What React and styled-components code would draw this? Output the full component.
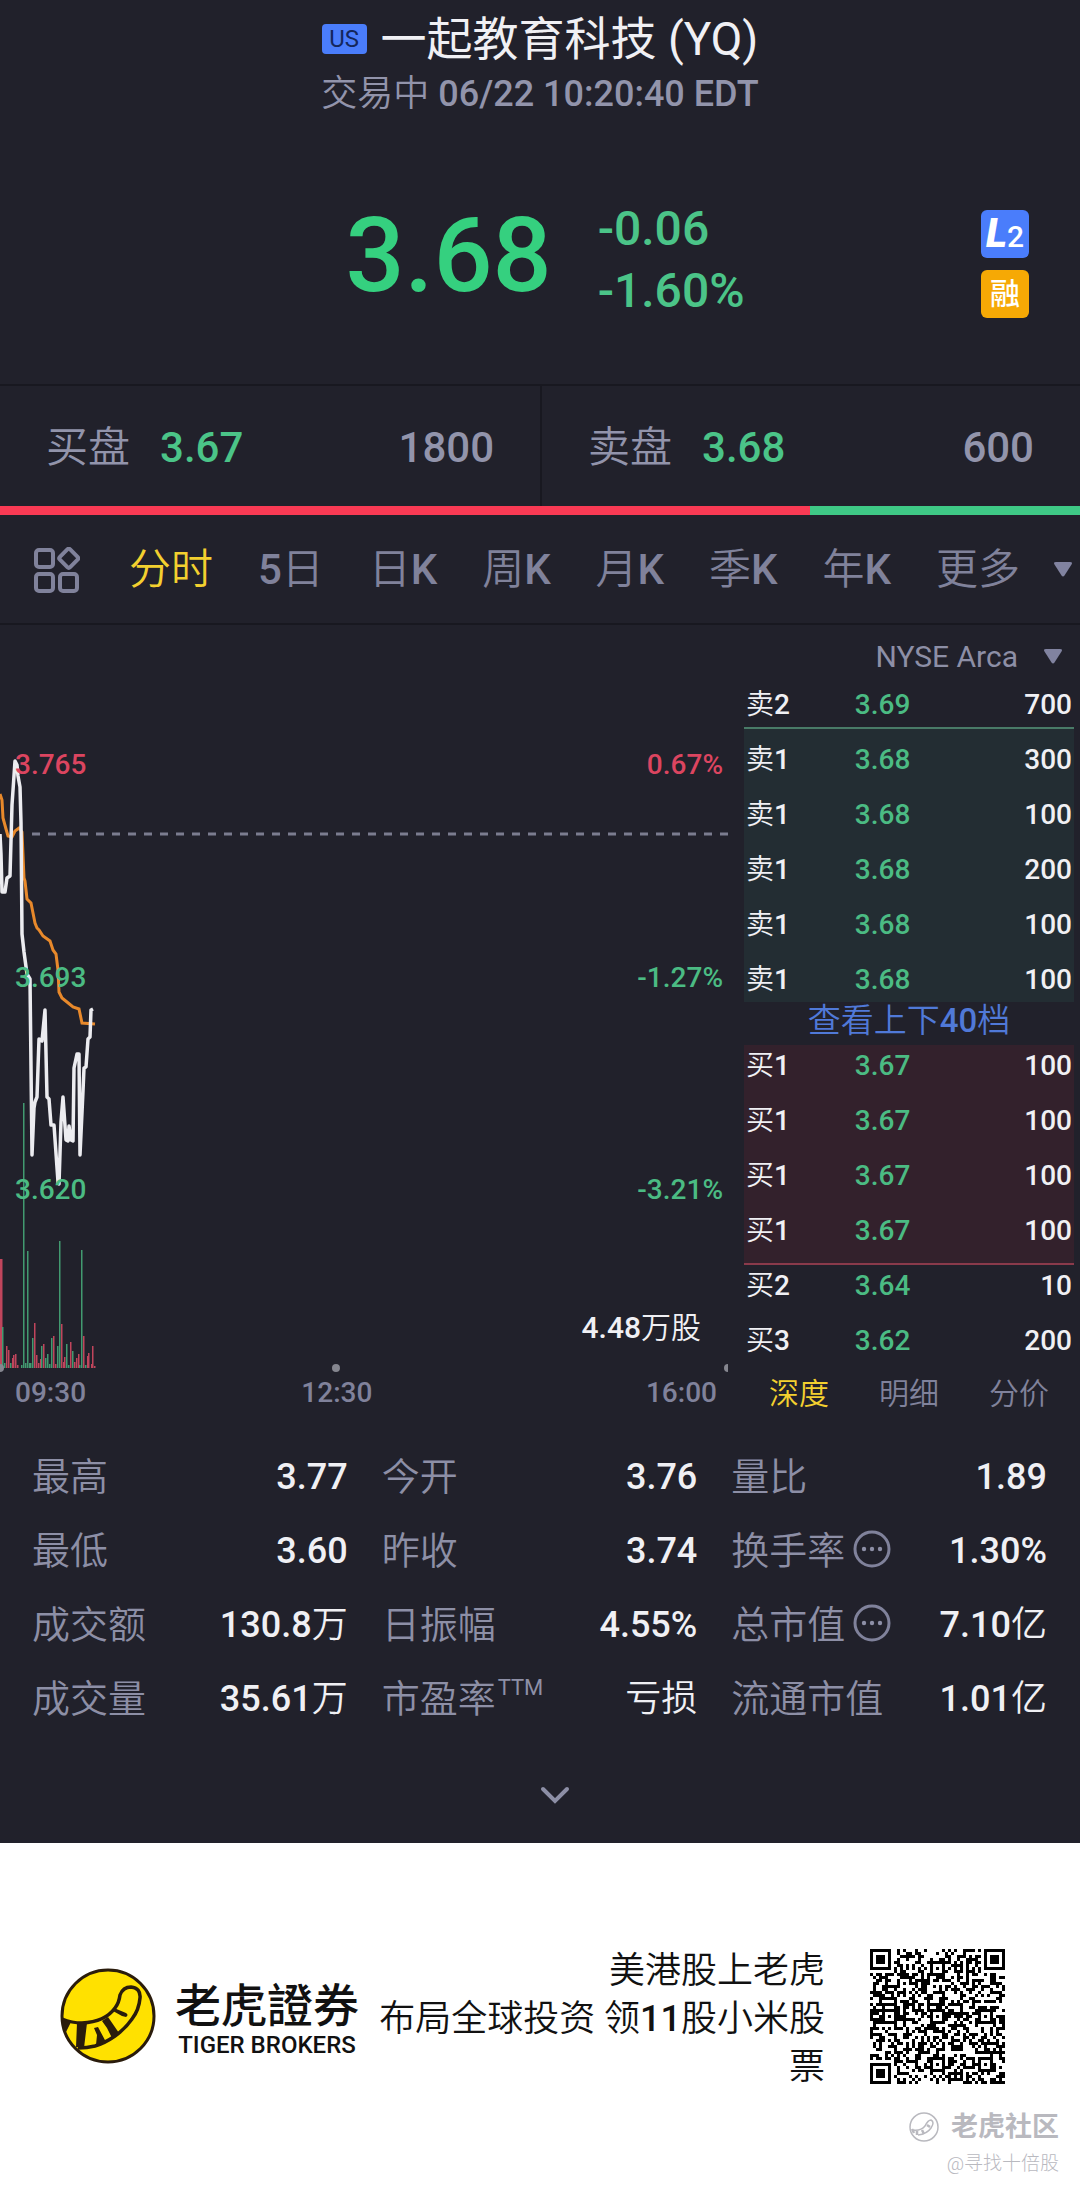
import React, { useState } from 'react';
import styled, { createGlobalStyle } from 'styled-components';

const GlobalStyle = createGlobalStyle`
  * {
    box-sizing: border-box;
  }
  body {
    margin: 0;
    background: #fff;
    font-family: Roboto, "Noto Sans CJK SC", sans-serif;
    font-weight: 500;
    line-height: 1.2;
  }
  button {
    padding: 0;
    border: none;
    background: none;
    font: inherit;
    color: inherit;
    cursor: pointer;
  }
`

const Screen = styled.main`
  background: #21212b;
  color: #f0f0f4;
`
const Header = styled.header`
  padding: 8px 0 62px;
  border-bottom: 2px solid #181820;
`
const TitleRow = styled.div`
  display: flex;
  justify-content: center;
  align-items: center;
  gap: 14px;
`
const Market = styled.span`
  width: 45px;
  height: 30px;
  border-radius: 4px;
  background: #4a7dfb;
  color: #14275c;
  font-size: 24px;
  font-weight: 400;
  line-height: 30px;
  text-align: center;
`
const Title = styled.h1`
  margin: 0;
  font-size: 46px;
  font-weight: 400;
  line-height: 62px;
`
const Session = styled.p`
  margin: 0;
  color: #9294ab;
  font-size: 36px;
  line-height: 48px;
  text-align: center;
`
const PriceRow = styled.div`
  display: grid;
  grid-template-columns: 1fr auto 1fr;
  align-items: start;
  padding-top: 80px;
`
const PriceBox = styled.div`
  grid-column: 2;
  display: flex;
  gap: 46px;
  padding-left: 10px;
  color: #4bc488;
`
const Price = styled.strong`
  color: #35d07f;
  font-size: 104px;
  font-weight: 500;
  line-height: 116px;
`
const Change = styled.div`
  font-size: 48px;
  line-height: 62px;
`
const Badges = styled.div`
  display: grid;
  gap: 12px;
  justify-self: end;
  padding: 12px 51px 0 0;
`
const Badge = styled.span`
  display: flex;
  justify-content: center;
  align-items: baseline;
  width: 48px;
  height: 48px;
  border-radius: 6px;
  background: ${props => props.$color};
  color: #fff;
  font-size: 30px;
  line-height: 48px;

  i {
    font-size: 40px;
    font-weight: 900;
  }
`

const Quotes = styled.section`
  display: grid;
  grid-template-columns: 1fr 1fr;
`
const Quote = styled.div`
  display: flex;
  align-items: center;
  gap: 30px;
  height: 120px;
  padding: 4px 46px 0;
  color: #9294ab;
  font-size: 42px;

  & + & {
    border-left: 2px solid #181820;
  }
`
const Han = styled.span`
  font-weight: 350;
`
const Up = styled.span`
  color: #4bc488;
`
const Size = styled.span`
  margin-left: auto;
`
const Ratio = styled.div`
  height: 9px;
  background: linear-gradient(to right, #f93a54 75%, #3fc986 75%);
`

const Periods = styled.nav`
  display: flex;
  justify-content: space-between;
  align-items: center;
  height: 110px;
  padding: 2px 8px 0 34px;
  border-bottom: 2px solid #181820;
  color: #80829b;
  font-size: 42px;
`
const IconButton = styled.button`
  display: flex;
`
const PeriodList = styled.div`
  flex: 1;
  display: flex;
  justify-content: space-between;
  margin-left: 49px;
`
const Period = styled.button`
  display: flex;
  align-items: center;
  gap: ${props => props.$gap || 0}px;
  color: ${props => (props.$active ? '#f3d02f' : '#80829b')};
`

const Depth = styled.section`
  display: grid;
  grid-template-columns: minmax(0, 1fr) 330px;
  gap: 16px;
  padding-right: 6px;
`
const Plot = styled.div`
  position: relative;
  height: 750px;

  svg {
    display: block;
    width: 100%;
    height: 100%;
  }
`
const Mark = styled.span`
  position: absolute;
  top: ${props => props.$top}px;
  ${props => (props.$right ? `right: ${props.$right}px;` : 'left: 15px;')}
  color: ${props => props.$color};
  font-size: ${props => props.$size || 28}px;
  line-height: 40px;
`
const Times = styled.div`
  display: grid;
  grid-template-columns: 35% 22% 1fr;
  color: #80829b;
  font-size: 28px;
  line-height: 36px;

  span {
    padding: 0 11px 0 15px;
  }
  span:nth-child(2) {
    text-align: center;
  }
  span:nth-child(3) {
    text-align: right;
  }
`

const Venue = styled.button`
  display: flex;
  justify-content: flex-end;
  align-items: center;
  gap: 26px;
  width: 100%;
  height: 47px;
  padding: 16px 12px 0 0;
  color: #8d8fa6;
  font-size: 30px;
  font-weight: 400;
`
const Book = styled.table`
  width: 100%;
  border-collapse: collapse;
  table-layout: fixed;
  font-size: 28px;

  td {
    height: 55px;
    padding: ${props => (props.$bid ? '0 2px 14px' : '10px 2px 0')};
    line-height: 34px;
  }
  td:nth-child(1) {
    width: 25%;
  }
  td:nth-child(2) {
    width: 34%;
    color: #4bbb83;
    text-align: center;
  }
  td:nth-child(3) {
    text-align: right;
  }
`
const Level = styled.tr`
  background: ${props => props.$fill || 'none'};
  box-shadow: ${props => props.$edge || 'none'};
`
const More = styled.a`
  display: block;
  height: 43px;
  color: #5079d8;
  font-size: 33px;
  line-height: 38px;
  text-align: center;
  text-decoration: none;
`
const BookTabs = styled.div`
  display: flex;
  justify-content: space-between;
  padding: 0 25px;
`
const BookTab = styled.button`
  color: ${props => (props.$active ? '#f3d02f' : '#80829b')};
  font-size: 30px;
  font-weight: 350;
  line-height: 38px;
`

const Stats = styled.dl`
  display: grid;
  grid-template-columns: repeat(3, 1fr);
  column-gap: 34px;
  margin: 0;
  padding: 28px 33px 0 32px;
`
const Stat = styled.div`
  display: flex;
  justify-content: space-between;
  align-items: center;
  height: 74px;

  dt {
    display: flex;
    align-items: center;
    gap: 8px;
    color: #8d8fa6;
    font-size: 38px;
    font-weight: 350;
  }
  dd {
    margin: 0;
    font-size: 36px;
  }
  sup {
    align-self: flex-start;
    margin-left: -6px;
    font-size: 22px;
    font-weight: 400;
    line-height: 22px;
  }
  button {
    padding-bottom: 6px;
  }
`
const Expand = styled.button`
  display: flex;
  justify-content: center;
  align-items: center;
  width: 100%;
  height: 106px;
  padding: 10px 0 0 30px;
`

const Footer = styled.footer`
  position: relative;
  display: flex;
  align-items: center;
  height: 346px;
  padding: 0 75px 0 60px;
  background: #fff;
  color: #111;
`
const Brand = styled.div`
  margin-left: 19px;
  padding-top: 6px;
  text-align: center;
`
const BrandName = styled.div`
  font-family: "Noto Sans CJK TC", sans-serif;
  font-size: 46px;
  line-height: 52px;
`
const BrandSub = styled.div`
  font-size: 24px;
  line-height: 34px;
`
const Slogan = styled.p`
  flex: 1;
  margin: 0 45px 0 10px;
  padding-top: 6px;
  font-size: 36px;
  font-weight: 350;
  line-height: 48px;
  text-align: right;

  b {
    font-weight: 500;
  }
`
const Watermark = styled.div`
  position: absolute;
  right: 21px;
  bottom: 12px;
  color: #b9b9bf;
  font-size: 19px;
  font-weight: 300;
  line-height: 26px;
  text-align: right;

  div {
    display: flex;
    align-items: center;
    justify-content: flex-end;
    gap: 12px;
    font-size: 27px;
    font-weight: 700;
    line-height: 48px;
  }
`

const periods = ['分时', '5日', '日K', '周K', '月K', '季K', '年K', '更多'];

const asks = [
  ['卖1', '3.68', '300'],
  ['卖1', '3.68', '100'],
  ['卖1', '3.68', '200'],
  ['卖1', '3.68', '100'],
  ['卖1', '3.68', '100'],
];
const bids = [
  ['买1', '3.67', '100'],
  ['买1', '3.67', '100'],
  ['买1', '3.67', '100'],
  ['买1', '3.67', '100'],
];

const stats = [
  { name: '最高', value: '3.77' },
  { name: '今开', value: '3.76' },
  { name: '量比', value: '1.89' },
  { name: '最低', value: '3.60' },
  { name: '昨收', value: '3.74' },
  { name: '换手率', value: '1.30%', info: true },
  { name: '成交额', value: '130.8万' },
  { name: '日振幅', value: '4.55%' },
  { name: '总市值', value: '7.10亿', info: true },
  { name: '成交量', value: '35.61万' },
  { name: '市盈率', value: '亏损', sup: 'TTM' },
  { name: '流通市值', value: '1.01亿' },
];

const priceLine =
  '0,209 1,229 2,267 5,267 7,253 10,251 12,180 15,136 17,140 18,151 20,162 21,198 22,309 24,327 27,349 30,354 ' +
  '32,530 34,483 35,477 37,472 39,414 42,416 45,385 47,472 49,474 51,500 54,500 58,557 59,559 61,497 63,472 66,515 ' +
  '68,516 69,501 71,515 73,516 74,443 77,429 79,429 80,530 83,466 84,443 86,442 88,414 90,412 91,385 93,384';

const averageLine =
  '0,169 2,175 3,193 6,204 8,211 12,212 15,206 19,203 22,207 24,253 25,256 27,274 31,278 35,298 37,303 39,305 ' +
  '43,311 50,316 53,325 56,329 58,345 59,367 62,373 67,377 73,382 79,384 82,398 95,399';

// [x, height, rising]
const volumes = [
  [0, 109, 1], [2, 41, 0], [4, 5, 0], [6, 22, 1], [8, 18, 1], [10, 5, 0], [12, 10, 1], [13, 13, 1], [15, 14, 1],
  [17, 3, 1], [21, 3, 0], [23, 265, 0], [25, 5, 0], [27, 117, 0], [29, 5, 0], [30, 5, 0], [32, 30, 0], [34, 45, 1],
  [36, 13, 1], [38, 5, 1], [40, 9, 1], [41, 22, 0], [43, 24, 1], [45, 10, 0], [47, 14, 0], [49, 4, 0], [51, 30, 0],
  [53, 32, 1], [55, 4, 1], [57, 22, 0], [59, 127, 0], [61, 44, 1], [63, 6, 1], [64, 11, 1], [66, 24, 0], [68, 3, 0],
  [70, 26, 1], [72, 17, 0], [74, 6, 1], [76, 10, 1], [78, 14, 1], [79, 3, 0], [81, 118, 0], [83, 32, 1], [85, 3, 0],
  [87, 12, 1], [88, 15, 1], [91, 4, 1], [92, 22, 1], [94, 2, 1],
];

// Chinese runs are set lighter than the digits and letters beside them
const Mixed = ({ children }) =>
  children.split(/([\u4e00-\u9fff]+)/).map((part, i) => (i % 2 ? <Han key={i}>{part}</Han> : part))

const Caret = () => (
  <svg width="18" height="15" viewBox="0 0 18 15" fill="#8183a0">
    <path d="M2 0h14q3 0 1.500 2.500L10.500 13.500q-1.500 2-3 0L.5 2.500Q-1 0 2 0z" />
  </svg>
)

const GridIcon = () => (
  <svg width="46" height="46" viewBox="0 0 46 46" fill="none" stroke="#80829b" strokeWidth="4">
    <rect x="2" y="3" width="17" height="17" rx="3" />
    <rect x="2" y="27" width="17" height="17" rx="3" />
    <rect x="26" y="27" width="17" height="17" rx="3" />
    <rect x="27.500" y="4" width="14.500" height="14.500" rx="2" transform="rotate(45 34.750 11.250)" />
  </svg>
)

const InfoIcon = () => (
  <svg width="38" height="38" viewBox="0 0 38 38">
    <circle cx="19" cy="19" r="17" fill="none" stroke="#80829b" strokeWidth="3" />
    <g fill="#8d8fa6">
      <circle cx="11" cy="19" r="2.200" />
      <circle cx="19" cy="19" r="2.200" />
      <circle cx="27" cy="19" r="2.200" />
    </g>
  </svg>
)

const TigerLogo = () => (
  <svg width="96" height="96" viewBox="0 0 96 96">
    <circle cx="48" cy="48" r="46" fill="#ffe100" stroke="#2a1c0c" strokeWidth="3" />
    <path
      d="M2 51Q12 55 22 55Q45 54 55 40Q59 35 60 27Q63 19 71 19Q81 20 80 30Q79 42 72 51Q65 61 55 68Q45 75 35 78Q27 80 18 80"
      fill="none" stroke="#2a1c0c" strokeWidth="3.500"
    />
    <path
      d="M2 50L11 54L5 66zM17 55L27 55L24 80L16 79zM34 60L38 59L46 74L36 77L37 67zM42 53L48 49L59 65L52 70L47 60zM54 40L66 45Q69 47 66 49L62 48L53 43z"
      fill="#2a1c0c"
    />
  </svg>
)

const TigerMark = () => (
  <svg width="30" height="30" viewBox="0 0 30 30" fill="none" stroke="#b9b9bf">
    <circle cx="15" cy="15" r="14" strokeWidth="1.500" />
    <path d="M4 18Q12 19 16 14Q19 8 22 8Q26 10 22 16Q18 22 9 23" strokeWidth="1.500" />
    <path d="M3 17l2 4M8 19v4M13 18l2 4M18 13l3 2" strokeWidth="2.500" />
  </svg>
)

const QR_SIZE = 45;

const inSquare = (x, y, cx, cy, r) => Math.max(Math.abs(x - cx), Math.abs(y - cy)) <= r;

function qrPath() {
  const finders = [[3, 3], [QR_SIZE - 4, 3], [3, QR_SIZE - 4]];
  const aligns = [[22, 6], [6, 22], [22, 22], [38, 22], [22, 38], [38, 38]];
  let seed = 20210622;
  let d = '';
  for (let y = 0; y < QR_SIZE; y++) {
    for (let x = 0; x < QR_SIZE; x++) {
      seed = (seed * 1103515245 + 12345) % 2147483648;
      let on = (seed >> 16) % 2 === 0;
      if (x === 6 || y === 6) on = (x + y) % 2 === 0;
      aligns.forEach(([cx, cy]) => {
        if (inSquare(x, y, cx, cy, 2)) on = !inSquare(x, y, cx, cy, 1) || (x === cx && y === cy);
      });
      finders.forEach(([cx, cy]) => {
        if (inSquare(x, y, cx, cy, 4)) {
          on = inSquare(x, y, cx, cy, 1) || (inSquare(x, y, cx, cy, 3) && !inSquare(x, y, cx, cy, 2));
        }
      });
      if (on) d += `M${x} ${y}h1v1h-1z`;
    }
  }
  return d;
}

const QrCode = () => (
  <svg width="135" height="135" viewBox="0 0 45 45" shapeRendering="crispEdges">
    <path d={qrPath()} fill="#000" />
  </svg>
)

const Chart = () => (
  <Plot>
    <Mark $top={120} $color="#dc4560">3.765</Mark>
    <Mark $top={333} $color="#4bbb83">3.693</Mark>
    <Mark $top={545} $color="#4bbb83">3.620</Mark>
    <svg>
      <line x1="32" y1="209" x2="100%" y2="209" stroke="#7b7c8f" strokeWidth="3" strokeDasharray="8 8" />
      {volumes.map(([x, h, rising]) => (
        <rect key={x} x={x} y={743 - h} width={x ? 1.5 : 2.5} height={h} fill={rising ? '#c0455c' : '#429a70'} />
      ))}
      <polyline points={averageLine} fill="none" stroke="#e8892b" strokeWidth="3" />
      <polyline points={priceLine} fill="none" stroke="#ececf0" strokeWidth="3.500" strokeLinejoin="round" />
      <g fill="#85868f">
        <circle cx="0" cy="743" r="4" />
        <circle cx="46.150%" cy="743" r="4" />
        <circle cx="100%" cy="743" r="4" />
      </g>
    </svg>
    <Mark $top={120} $right={5} $color="#dc4560">0.67%</Mark>
    <Mark $top={333} $right={5} $color="#4bbb83">-1.27%</Mark>
    <Mark $top={545} $right={5} $color="#4bbb83">-3.21%</Mark>
    <Mark $top={683} $right={27} $size={30} $color="#f0f0f4"><Mixed>4.48万股</Mixed></Mark>
  </Plot>
)

const Row = ({ cells, ...rest }) => (
  <Level {...rest}>
    {cells.map((cell, i) => <td key={i}><Mixed>{cell}</Mixed></td>)}
  </Level>
)

const App = () => {
  const [period, setPeriod] = useState('分时');
  const [bookTab, setBookTab] = useState('深度');

  return (
    <>
      <GlobalStyle />
      <Screen>
        <Header>
          <TitleRow>
            <Market>US</Market>
            <Title>一起教育科技 (YQ)</Title>
          </TitleRow>
          <Session><Mixed>交易中 06/22 10:20:40 EDT</Mixed></Session>
          <PriceRow>
            <PriceBox>
              <Price>3.68</Price>
              <Change>
                <div>-0.06</div>
                <div>-1.60%</div>
              </Change>
            </PriceBox>
            <Badges>
              <Badge $color="#4a7dfb"><i>L</i>2</Badge>
              <Badge $color="#f6a905">融</Badge>
            </Badges>
          </PriceRow>
        </Header>

        <Quotes>
          <Quote><Han>买盘</Han><Up>3.67</Up><Size>1800</Size></Quote>
          <Quote><Han>卖盘</Han><Up>3.68</Up><Size>600</Size></Quote>
        </Quotes>
        <Ratio />

        <Periods>
          <IconButton aria-label="指标"><GridIcon /></IconButton>
          <PeriodList>
            {periods.map(name => (
              <Period key={name} $active={name === period} $gap={name === '更多' ? 34 : 0} onClick={() => setPeriod(name)}>
                <span><Mixed>{name}</Mixed></span>
                {name === '更多' && <Caret />}
              </Period>
            ))}
          </PeriodList>
        </Periods>

        <Depth>
          <div>
            <Chart />
            <Times>
              <span>09:30</span>
              <span>12:30</span>
              <span>16:00</span>
            </Times>
          </div>
          <div>
            <Venue>NYSE Arca <Caret /></Venue>
            <Book>
              <tbody>
                <Row cells={['卖2', '3.69', '700']} />
                {asks.map((cells, i) => (
                  <Row key={i} cells={cells} $fill="#232d33" $edge={i === 0 && 'inset 0 2px #497a67'} />
                ))}
              </tbody>
            </Book>
            <More href="#depth"><Mixed>查看上下40档</Mixed></More>
            <Book $bid>
              <tbody>
                {bids.map((cells, i) => (
                  <Row key={i} cells={cells} $fill="#33212c" $edge={i === 3 && 'inset 0 -2px #8a3a4b'} />
                ))}
                <Row cells={['买2', '3.64', '10']} />
                <Row cells={['买3', '3.62', '200']} />
              </tbody>
            </Book>
            <BookTabs>
              {['深度', '明细', '分价'].map(name => (
                <BookTab key={name} $active={name === bookTab} onClick={() => setBookTab(name)}>{name}</BookTab>
              ))}
            </BookTabs>
          </div>
        </Depth>

        <Stats>
          {stats.map(({ name, value, info, sup }) => (
            <Stat key={name}>
              <dt>
                {name}
                {sup && <sup>{sup}</sup>}
                {info && <IconButton aria-label={name + '说明'}><InfoIcon /></IconButton>}
              </dt>
              <dd><Mixed>{value}</Mixed></dd>
            </Stat>
          ))}
        </Stats>
        <Expand aria-label="展开">
          <svg width="30" height="18" viewBox="0 0 30 18" fill="none" stroke="#8d8fa6" strokeWidth="4" strokeLinecap="round">
            <path d="M3 3L15 15L27 3" />
          </svg>
        </Expand>
      </Screen>

      <Footer>
        <TigerLogo />
        <Brand>
          <BrandName>老虎證券</BrandName>
          <BrandSub>TIGER BROKERS</BrandSub>
        </Brand>
        <Slogan>美港股上老虎<br />布局全球投资 领<b>11</b>股小米股票</Slogan>
        <QrCode />
        <Watermark>
          <div><TigerMark />老虎社区</div>
          @寻找十倍股
        </Watermark>
      </Footer>
    </>
  )
}

export default App
